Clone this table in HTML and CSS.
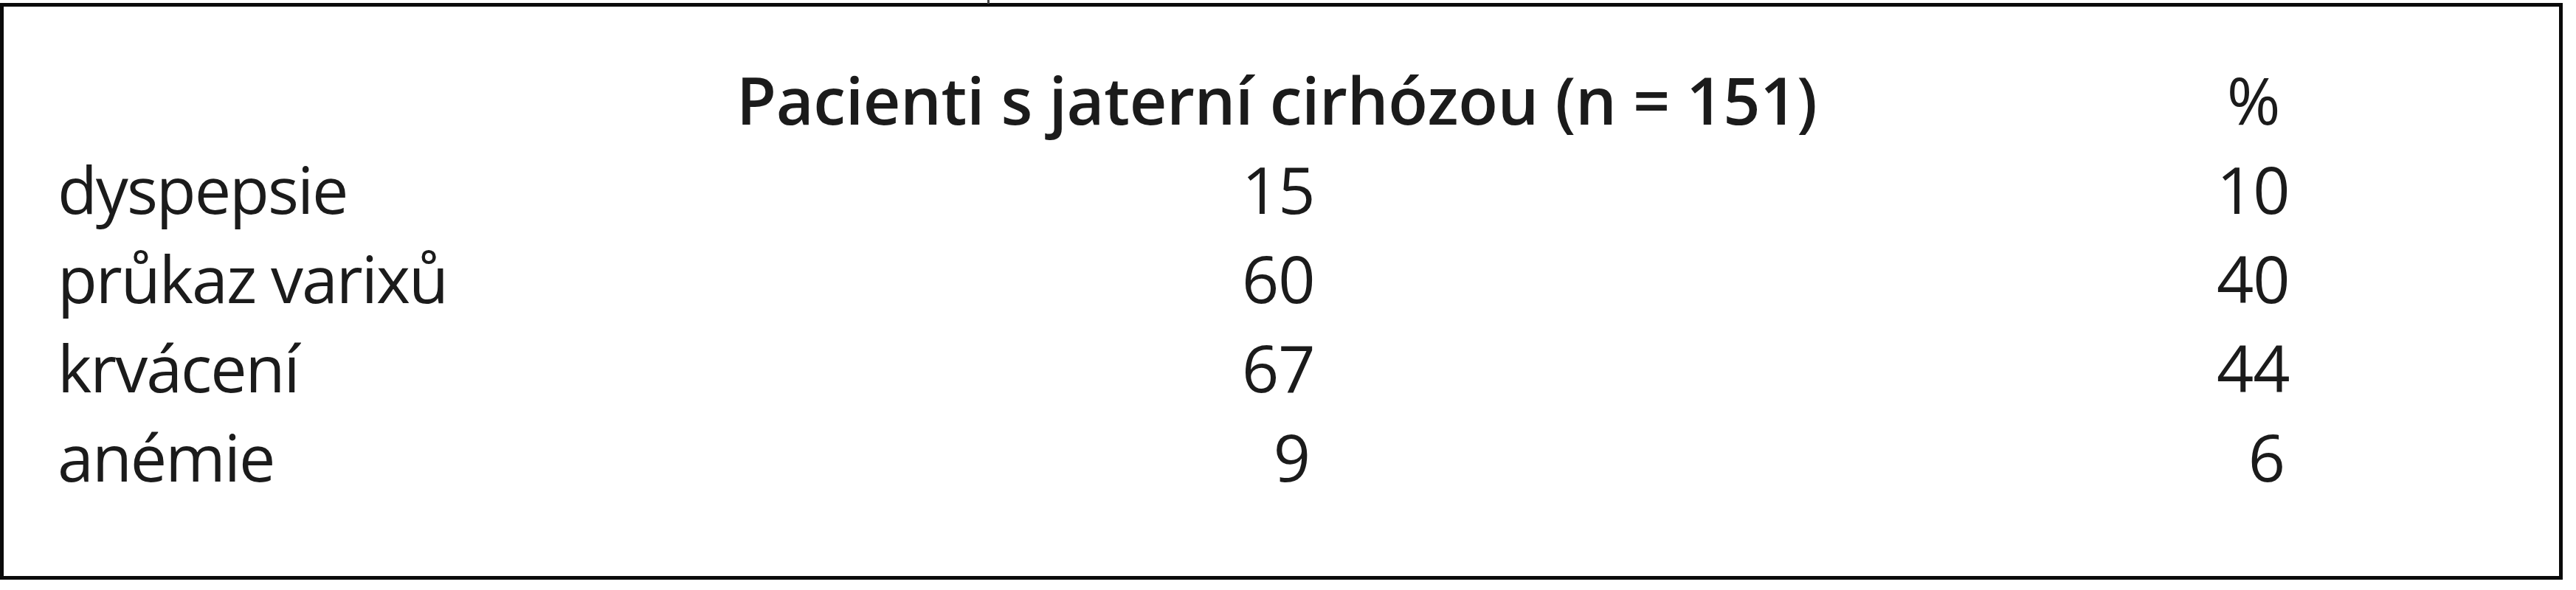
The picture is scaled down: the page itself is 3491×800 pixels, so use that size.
FILE: index.html
```html
<!DOCTYPE html>
<html lang="cs">
<head>
<meta charset="utf-8">
<title>Pacienti s jaterní cirhózou</title>
<link rel="stylesheet" href="styles.css">
</head>
<body>
<div class="table">
  <div class="cell head"></div>
  <div class="cell head title">Pacienti s jaterní cirhózou (n = 151)</div>
  <div class="cell head pct">%</div>

  <div class="cell label">dyspepsie</div>
  <div class="cell num"><span>15</span></div>
  <div class="cell num"><span>10</span></div>

  <div class="cell label">průkaz varixů</div>
  <div class="cell num"><span>60</span></div>
  <div class="cell num"><span>40</span></div>

  <div class="cell label">krvácení</div>
  <div class="cell num"><span>67</span></div>
  <div class="cell num"><span>44</span></div>

  <div class="cell label">anémie</div>
  <div class="cell num"><span>9</span></div>
  <div class="cell num"><span>6</span></div>
</div>
</body>
</html>
```

FILE: styles.css
```css
html, body {
  margin: 0;
  padding: 0;
  background: #ffffff;
}

body {
  font-family: "Open Sans", "Noto Sans", sans-serif;
  color: #1b1b1b;
}

.table {
  position: relative;
  box-sizing: border-box;
  width: 3473px;
  height: 782px;
  margin-top: 4px;
  border: 5px solid #0a0a0a;
  padding: 66px 0 0 73px;
  display: grid;
  grid-template-columns: 748px 1462px 1fr;
  grid-auto-rows: 121px;
  column-gap: 172px;
  align-content: start;
}

.table::before {
  content: "";
  position: absolute;
  top: -9px;
  left: 1333px;
  width: 3px;
  height: 5px;
  background: #444;
}

.cell {
  font-size: 88px;
  line-height: 121px;
  white-space: nowrap;
}

.head {
  height: 153px;
}

.title {
  font-weight: 600;
  letter-spacing: -0.4px;
}

.pct {
  text-align: center;
  font-weight: 400;
  padding-left: 8px;
}

.label {
  letter-spacing: -2px;
}

.num {
  text-align: center;
}

.num span {
  display: inline-block;
  width: 92px;
  text-align: right;
  letter-spacing: -1px;
}
```
